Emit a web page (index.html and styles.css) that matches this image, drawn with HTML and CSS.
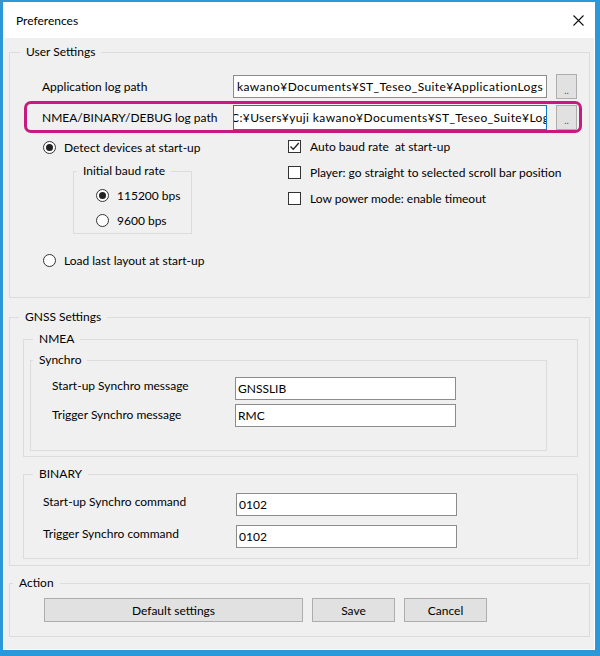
FILE: index.html
```html
<!DOCTYPE html>
<html lang="en">
<head>
  <meta charset="UTF-8" />
  <title>Preferences</title>
  <link rel="stylesheet" href="styles.css">
</head>
<body>
  <div class="window">
    <!-- Title bar -->
    <div class="titlebar">
      <span class="title">Preferences</span>
      <span class="close">
        <svg width="11" height="11" viewBox="0 0 11 11">
          <path d="M0.5 0.5 L10.5 10.5 M10.5 0.5 L0.5 10.5" stroke="#111" stroke-width="1.1" fill="none"/>
        </svg>
      </span>
    </div>

    <div class="content">
      <!-- User settings -->
      <fieldset class="group user-group">
        <legend>User Settings</legend>

        <div class="path-row first">
          <span class="path-label">Application log path</span>
          <div class="textbox path-box to-end"><span>C:¥Users¥yuji kawano¥Documents¥ST_Teseo_Suite¥ApplicationLogs</span></div>
          <button class="btn browse">..</button>
        </div>
        <div class="path-row marked">
          <span class="path-label">NMEA/BINARY/DEBUG log path</span>
          <div class="textbox path-box focused cut"><span>C:¥Users¥yuji kawano¥Documents¥ST_Teseo_Suite¥Logs</span></div>
          <button class="btn browse">..</button>
        </div>

        <div class="options">
          <div class="col-left">
            <div class="opt-row detect"><span class="radio on"></span>Detect devices at start-up</div>
            <fieldset class="group baud-group">
              <legend>Initial baud rate</legend>
              <div class="opt-row"><span class="radio on"></span>115200 bps</div>
              <div class="opt-row"><span class="radio"></span>9600 bps</div>
            </fieldset>
            <div class="opt-row load"><span class="radio"></span>Load last layout at start-up</div>
          </div>
          <div class="col-right">
            <div class="opt-row">
              <span class="check">
                <svg width="11" height="11" viewBox="0 0 11 11">
                  <path d="M1.5 5.5 L4.3 8.3 L9.8 2" stroke="#222" stroke-width="1.3" fill="none"/>
                </svg>
              </span>Auto baud rate&nbsp; at start-up
            </div>
            <div class="opt-row"><span class="check"></span>Player: go straight to selected scroll bar position</div>
            <div class="opt-row"><span class="check"></span>Low power mode: enable timeout</div>
          </div>
        </div>
      </fieldset>

      <!-- GNSS settings -->
      <fieldset class="group gnss-group">
        <legend>GNSS Settings</legend>

        <fieldset class="group nmea-group">
          <legend>NMEA</legend>
          <fieldset class="group synchro-group">
            <legend>Synchro</legend>
            <div class="field-row">
              <span class="field-label">Start-up Synchro message</span>
              <div class="textbox field-box">GNSSLIB</div>
            </div>
            <div class="field-row second">
              <span class="field-label">Trigger Synchro message</span>
              <div class="textbox field-box">RMC</div>
            </div>
          </fieldset>
        </fieldset>

        <fieldset class="group binary-group">
          <legend>BINARY</legend>
          <div class="field-row">
            <span class="field-label">Start-up Synchro command</span>
            <div class="textbox field-box">0102</div>
          </div>
          <div class="field-row second">
            <span class="field-label">Trigger Synchro command</span>
            <div class="textbox field-box">0102</div>
          </div>
        </fieldset>
      </fieldset>

      <!-- Actions -->
      <fieldset class="group action-group">
        <legend>Action</legend>
        <div class="actions">
          <button class="btn default-btn">Default settings</button>
          <button class="btn small-btn">Save</button>
          <button class="btn small-btn">Cancel</button>
        </div>
      </fieldset>
    </div>
  </div>
</body>
</html>
```

FILE: styles.css
```css
/* ---------- Base ---------- */
* {
  box-sizing: border-box;
}
body {
  margin: 0;
  font-family: Lato, "Liberation Sans", sans-serif;
  font-size: 12px;
  color: #000;
  background: #fff;
}

/* ---------- Window frame ---------- */
.window {
  width: 600px;
  height: 656px;
  border: solid #2d98d8;
  border-width: 2px 5px 6px 3px;
  display: flex;
  flex-direction: column;
  background: #fff;
}
.titlebar {
  height: 36px;
  display: flex;
  align-items: center;
  justify-content: space-between;
  padding: 1px 11px 0 13px;
}
.close svg {
  display: block;
}
.content {
  flex: 1;
  background: #f0f0f0;
  border: 1px solid #fff;
  border-top: 0;
  padding: 6px 0 0 5px;
}

/* ---------- Group boxes ---------- */
.group {
  border: 1px solid #dcdcdc;
  margin: 0;
  padding: 0;
  min-width: 0;
}
.group legend {
  padding: 0 6px;
  line-height: 16px;
}

.user-group {
  width: 581px;
  height: 254px;
}
.user-group > legend {
  margin-left: 10px;
}
.gnss-group {
  width: 581px;
  height: 257px;
  margin-top: 11px;
}
.gnss-group > legend {
  margin-left: 9px;
}
.nmea-group {
  width: 555px;
  height: 126px;
  margin: 6px 0 0 13px;
}
.nmea-group > legend {
  margin-left: 9px;
}
.synchro-group {
  width: 517px;
  height: 99px;
  margin: 5px 0 0 6px;
  padding-left: 21px;
}
.synchro-group > legend {
  margin-left: -19px;
}
.binary-group {
  width: 555px;
  height: 93px;
  margin: 9px 0 0 13px;
  padding-left: 19px;
}
.binary-group > legend {
  margin-left: -10px;
}
.action-group {
  width: 581px;
  height: 62px;
  margin-top: 9px;
}
.action-group > legend {
  margin-left: 3px;
}

/* ---------- Controls ---------- */
.textbox {
  background: #fff;
  border: 1px solid #8c8c8c;
  padding: 0 3px;
  white-space: nowrap;
  overflow: hidden;
  display: flex;
  align-items: center;
}
.textbox.focused {
  border-color: #0a78d4;
}
.to-end {
  justify-content: flex-end;
}
.cut span {
  margin-left: -6px;
}
.btn {
  font: inherit;
  color: #000;
  background: #e1e1e1;
  border: 1px solid #adadad;
  padding: 0;
}

/* ---------- Log path rows ---------- */
.path-row {
  display: flex;
  align-items: center;
  height: 25px;
  margin: 0 7px 0 14px;
  padding-left: 18px;
}
.path-row.first {
  margin-top: 14px;
}
.path-row.marked {
  height: 32px;
  margin-top: 2px;
  padding-left: 15px;
  border: 3px solid #c8197c;
  border-radius: 7px;
}
.path-label {
  width: 191px;
}
.path-box {
  width: 314px;
  height: 23px;
  letter-spacing: 0.4px;
}
.marked .path-box {
  height: 25px;
}
.browse {
  width: 21px;
  height: 25px;
  margin-left: 9px;
  font-size: 10px;
  line-height: 10px;
  padding-top: 6px;
  color: #555;
}

/* ---------- Options ---------- */
.options {
  display: flex;
}
.col-left {
  width: 245px;
  margin-left: 33px;
}
.col-right {
  flex: 1;
}
.opt-row {
  display: flex;
  align-items: center;
  height: 26px;
  white-space: nowrap;
}
.opt-row.detect {
  margin-top: 1px;
}
.opt-row.load {
  margin-top: 13px;
}
.radio {
  width: 13px;
  height: 13px;
  border: 1px solid #333;
  border-radius: 50%;
  background: #fff;
  margin-right: 8px;
  display: flex;
  align-items: center;
  justify-content: center;
}
.radio.on::after {
  content: "";
  width: 7px;
  height: 7px;
  border-radius: 50%;
  background: #222;
}
.check {
  width: 13px;
  height: 13px;
  border: 1px solid #333;
  background: #fff;
  margin-right: 9px;
}
.check svg {
  display: block;
}
.baud-group {
  width: 119px;
  height: 71px;
  margin: 3px 0 0 30px;
  padding: 4px 0 0 22px;
}
.baud-group > legend {
  margin-left: -19px;
}
.baud-group .opt-row {
  height: 25px;
}

/* ---------- GNSS fields ---------- */
.field-row {
  display: flex;
  align-items: flex-start;
  margin-top: 9px;
}
.field-row.second {
  margin-top: 4px;
}
.synchro-group .field-row.second .field-label {
  padding-top: 3px;
}
.binary-group .field-row {
  margin-top: 11px;
}
.binary-group .field-row.second {
  margin-top: 9px;
}
.field-label {
  width: 183px;
  line-height: 16px;
  padding-top: 1px;
}
.binary-group .field-label {
  width: 193px;
}
.field-box {
  width: 221px;
  height: 23px;
  padding: 0 2px;
}

/* ---------- Action buttons ---------- */
.actions {
  display: flex;
  gap: 9px;
  margin-top: 7px;
  padding-left: 34px;
}
.default-btn {
  width: 259px;
  height: 24px;
}
.small-btn {
  width: 83px;
  height: 24px;
}
```
